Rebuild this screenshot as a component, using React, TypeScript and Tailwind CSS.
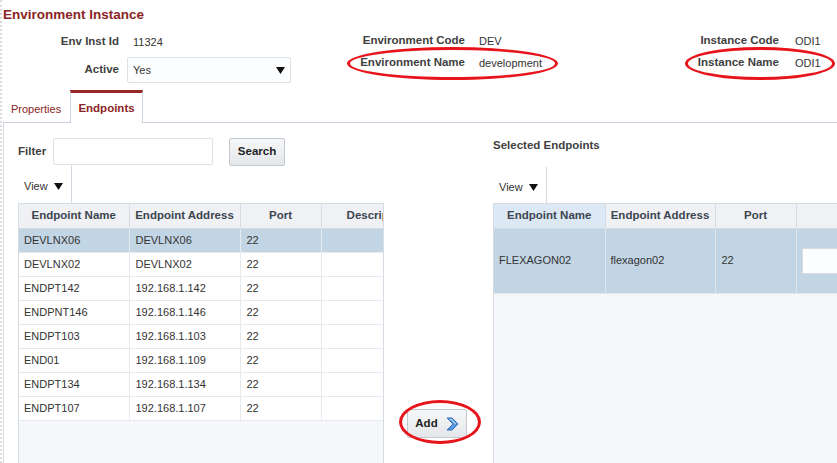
import React from "react";

const font = { fontFamily: '"Liberation Sans", Arial, sans-serif' };

const rows = [
  ["DEVLNX06", "DEVLNX06", "22"],
  ["DEVLNX02", "DEVLNX02", "22"],
  ["ENDPT142", "192.168.1.142", "22"],
  ["ENDPNT146", "192.168.1.146", "22"],
  ["ENDPT103", "192.168.1.103", "22"],
  ["END01", "192.168.1.109", "22"],
  ["ENDPT134", "192.168.1.134", "22"],
  ["ENDPT107", "192.168.1.107", "22"],
];

function Caret({ className = "" }: { className?: string }) {
  return (
    <svg width="9" height="7" viewBox="0 0 9 7" className={className}>
      <path d="M0 0H9L4.5 7Z" fill="#111" />
    </svg>
  );
}

function Chevron() {
  return (
    <svg width="14" height="14" viewBox="0 0 14 14">
      <path d="M2 1H7L13 7L7 13H2L8 7Z" fill="#5a9be0" stroke="#2d6fb8" strokeWidth="1" strokeLinejoin="round" />
      <path d="M4.5 2.5H6.5L10.5 7" fill="none" stroke="#d6e8fb" strokeWidth="1" />
    </svg>
  );
}

function Ellipse({ className }: { className: string }) {
  return (
    <div className={`absolute rounded-[50%] border-[3px] border-[#e8141b] pointer-events-none ${className}`} />
  );
}

function ViewBar({ h }: { h: string }) {
  return (
    <div className={`w-[54px] ${h} border-r border-[#d3d9e0] flex items-center pl-[6px] pt-[4px] gap-[6px] text-[11px] text-[#333]`}>
      <span>View</span>
      <Caret />
    </div>
  );
}

export default function App() {
  return (
    <div style={font} className="relative w-[837px] h-[463px] overflow-hidden bg-white border-l-2 border-dotted border-[#dcdcdc] text-[#333]">
      {/* Title */}
      <div className="h-[30px] pl-[1px] pt-[7px] text-[13.5px] leading-[16px] font-bold text-[#8b2424]">Environment Instance</div>

      {/* Header form */}
      <div className="flex h-[60px]">
        <div className="w-[298px] pt-[1px] grid grid-cols-[117px_1fr] gap-x-[8px] gap-y-[4px] content-start">
          <div className="h-[22px] flex items-center justify-end text-[11.5px] font-bold text-[#3f3f3f]">Env Inst Id</div>
          <div className="h-[22px] flex items-center pl-[6px] text-[11px]">11324</div>
          <div className="h-[26px] flex items-center justify-end text-[11.5px] font-bold text-[#3f3f3f]">Active</div>
          <div className="h-[26px] w-[164px] border border-[#dde2e7] rounded-[2px] bg-[#fcfdfe] flex items-center justify-between pl-[5px] pr-[5px] text-[11px]">
            <span>Yes</span>
            <Caret />
          </div>
        </div>
        <div className="w-[260px] grid grid-cols-[165px_1fr] gap-x-[14px] content-start">
          <div className="h-[22px] flex items-center justify-end text-[11.5px] font-bold text-[#3f3f3f]">Environment Code</div>
          <div className="h-[22px] flex items-center text-[11px]">DEV</div>
          <div className="h-[22px] flex items-center justify-end text-[11.5px] font-bold text-[#3f3f3f]">Environment Name</div>
          <div className="h-[22px] flex items-center text-[11px]">development</div>
        </div>
        <div className="flex-1 grid grid-cols-[219px_1fr] gap-x-[16px] content-start">
          <div className="h-[22px] flex items-center justify-end text-[11.5px] font-bold text-[#3f3f3f]">Instance Code</div>
          <div className="h-[22px] flex items-center text-[11px]">ODI1</div>
          <div className="h-[22px] flex items-center justify-end text-[11.5px] font-bold text-[#3f3f3f]">Instance Name</div>
          <div className="h-[22px] flex items-center text-[11px]">ODI1</div>
        </div>
      </div>

      {/* Tabs */}
      <div className="ml-[1px] h-[33px] flex items-end border-b border-[#c9d3dd]">
        <div className="h-full w-[67px] flex items-center pl-[8px] pt-[6px] text-[11px] text-[#8b2424]">Properties</div>
        <div className="h-[33px] -mb-px w-[73px] bg-white border-t-[3px] border-t-[#962727] border-x border-x-[#c9d3dd] flex items-center justify-center pt-[2px] text-[11.5px] font-bold text-[#8b2424]">
          Endpoints
        </div>
      </div>

      {/* Panel */}
      <div className="ml-[1px] flex h-[341px] border-l border-[#d3dbe3]">
        {/* Available endpoints */}
        <div className="w-[386px] shrink-0 flex flex-col">
          <div className="flex items-center pl-[14px] mt-[15px] h-[27px]">
            <span className="w-[35px] text-[11.5px] font-bold text-[#3f3f3f]">Filter</span>
            <div className="w-[160px] h-[27px] border border-[#dde2e7] rounded-[2px] bg-white" />
            <button className="ml-[16px] w-[56px] h-[28px] border border-[#c3c9cf] rounded-[2px] bg-gradient-to-b from-[#f6f7f8] to-[#e4e7ea] text-[11.5px] font-bold text-[#222]">
              Search
            </button>
          </div>
          <div className="ml-[14px]">
            <ViewBar h="h-[38px]" />
          </div>
          <div className="ml-[14px] w-[366px] flex-1 overflow-hidden border-x border-t border-[#d5dce4] bg-[#f6f7fa]">
            <table className="table-fixed border-collapse w-[416px] text-[11px]">
              <colgroup>
                <col className="w-[110px]" />
                <col className="w-[111px]" />
                <col className="w-[81px]" />
                <col className="w-[114px]" />
              </colgroup>
              <thead>
                <tr className="h-[24px] bg-[#eff1f4] text-[11.5px] font-bold text-[#3c4550]">
                  <th className="border-b border-r border-[#d5dce4] font-bold">Endpoint Name</th>
                  <th className="border-b border-r border-[#d5dce4] font-bold">Endpoint Address</th>
                  <th className="border-b border-r border-[#d5dce4] font-bold">Port</th>
                  <th className="border-b border-[#d5dce4] font-bold">Description</th>
                </tr>
              </thead>
              <tbody>
                {rows.map((r, i) => (
                  <tr key={r[0]} className={`h-[24px] ${i === 0 ? "bg-[#c2d5e4]" : "bg-white"}`}>
                    <td className="border-b border-r border-[#e6e9ed] pl-[5px] text-left">{r[0]}</td>
                    <td className="border-b border-r border-[#e6e9ed] pl-[6px] text-left">{r[1]}</td>
                    <td className="border-b border-r border-[#e6e9ed] pl-[6px] text-left">{r[2]}</td>
                    <td className="border-b border-[#e6e9ed]"></td>
                  </tr>
                ))}
              </tbody>
            </table>
          </div>
        </div>

        {/* Add shuttle */}
        <div className="w-[103px] shrink-0 pl-[17px] pt-[286px]">
          <button className="w-[60px] h-[29px] border border-[#c3c9cf] rounded-[2px] bg-gradient-to-b from-[#f6f7f8] to-[#e4e7ea] flex items-center justify-center gap-[7px] text-[11.5px] font-bold text-[#222]">
            <span>Add</span>
            <Chevron />
          </button>
        </div>

        {/* Selected endpoints */}
        <div className="flex-1 flex flex-col min-w-0">
          <div className="mt-[15px] h-[14px] leading-[14px] text-[11.5px] font-bold text-[#3f3f3f]">Selected Endpoints</div>
          <div className="mt-[15px]">
            <ViewBar h="h-[36px]" />
          </div>
          <div className="flex-1 overflow-hidden border-l border-t border-[#d5dce4] bg-[#f6f7fa]">
            <table className="table-fixed border-collapse w-[500px] text-[11px]">
              <colgroup>
                <col className="w-[111px]" />
                <col className="w-[110px]" />
                <col className="w-[81px]" />
                <col className="w-[198px]" />
              </colgroup>
              <thead>
                <tr className="h-[24px] text-[11.5px] font-bold text-[#3c4550]">
                  <th className="bg-[#dce8f4] border-b border-r border-[#d5dce4] font-bold">Endpoint Name</th>
                  <th className="bg-[#eff1f4] border-b border-r border-[#d5dce4] font-bold">Endpoint Address</th>
                  <th className="bg-[#eff1f4] border-b border-r border-[#d5dce4] font-bold">Port</th>
                  <th className="bg-[#eff1f4] border-b border-[#d5dce4] font-bold"></th>
                </tr>
              </thead>
              <tbody>
                <tr className="h-[65px] bg-[#c2d5e4]">
                  <td className="border-b border-r border-[#e2e7ec] pl-[5px] text-left">FLEXAGON02</td>
                  <td className="border-b border-r border-[#e2e7ec] pl-[5px] text-left">flexagon02</td>
                  <td className="border-b border-r border-[#e2e7ec] pl-[6px] text-left">22</td>
                  <td className="border-b border-[#e2e7ec] pl-[5px]">
                    <div className="w-[120px] h-[26px] border border-[#d5dce4] bg-[#fcfdfe]" />
                  </td>
                </tr>
              </tbody>
            </table>
          </div>
        </div>
      </div>

      {/* Annotation ellipses */}
      <Ellipse className="left-[345px] top-[47px] w-[211px] h-[33px]" />
      <Ellipse className="left-[683px] top-[47px] w-[150px] h-[33px]" />
      <Ellipse className="left-[397px] top-[400px] w-[82px] h-[44px]" />
    </div>
  );
}
